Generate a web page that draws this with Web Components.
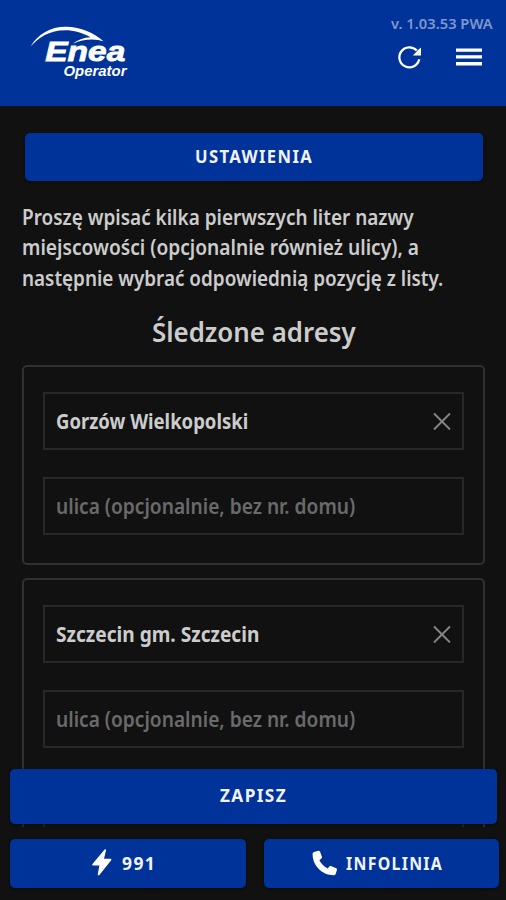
<!DOCTYPE html>
<html lang="pl">
<head>
<meta charset="utf-8">
<meta name="viewport" content="width=device-width, initial-scale=1">
<title>Enea Operator</title>
<style>
    html, body {
        margin: 0;
        height: 100%;
        overflow: hidden;
        background: #111;
    }
</style>
</head>
<body>
<enea-app></enea-app>
<script>
// Single line of text, squeezed to the given width
class FitText extends HTMLElement {

    constructor() {
        super();
        this.root = this.attachShadow({ mode: 'open' });
        this.root.innerHTML = `<style>
    :host {
        display: block;
        flex: 0 0 auto;
        white-space: nowrap;
    }

    span {
        display: inline-block;
        transform-origin: 0 50%;
    }
</style>
<span><slot></slot></span>`;
    }

    connectedCallback() {
        const width = parseFloat(this.getAttribute('width'));
        const span = this.root.querySelector('span');
        this.style.width = width + 'px';
        span.style.transform = `scaleX(${width / span.offsetWidth})`;
    }
}

class EneaLogo extends HTMLElement {

    constructor() {
        super();
        this.root = this.attachShadow({ mode: 'open' });
        this.root.innerHTML = `<style>
    :host {
        display: block;
        width: 100px;
        height: 56px;
    }

    svg {
        display: block;
        fill: #fff;
        font: italic bold 28.5px "Liberation Sans", Arial, sans-serif;
    }

    .operator {
        font-size: 14.5px;
    }
</style>
<svg width="100" height="56" viewBox="30 26 100 56">
    <path d="M30.5 46.5C38 34 51 26.6 66 26.8C81 27 94 33 103.5 41.3C97 38.8 84 38 73 43.8C77 40 84 37.4 90.5 37.2C82 32.5 74 30.2 65 30.2C50 30.3 39 37 30.5 46.5Z"/>
    <text x="45.3" y="60.6" textLength="80" lengthAdjust="spacingAndGlyphs" stroke="#fff" stroke-width=".8">Enea</text>
    <text class="operator" x="63.5" y="76.3" textLength="63" lengthAdjust="spacingAndGlyphs">Operator</text>
</svg>`;
    }
}

class AppHeader extends HTMLElement {

    constructor() {
        super();
        this.root = this.attachShadow({ mode: 'open' });
        this.root.innerHTML = `<style>
    :host {
        display: flex;
        justify-content: space-between;
        box-sizing: border-box;
        height: 106px;
        flex: 0 0 auto;
        padding: 13px 13px 0 30px;
        background: #003399;
    }

    enea-logo {
        margin-top: 13px;
    }

    .right {
        display: flex;
        flex-direction: column;
        align-items: flex-end;
    }

    .version {
        color: #7f97cc;
        font-size: 15px;
        font-weight: 600;
        line-height: 21px;
    }

    .icons {
        display: flex;
        gap: 33px;
        margin: 10px 11px 0 0;
    }

    svg {
        display: block;
    }
</style>
<enea-logo></enea-logo>
<div class="right">
    <fit-text class="version" width="102">v. 1.03.53 PWA</fit-text>
    <div class="icons">
        <svg width="28" height="28" viewBox="0 0 28 28">
            <path d="M24.2 15.2A10 10 0 1 1 21.8 6.6" fill="none" stroke="#fff" stroke-width="2.3"/>
            <path d="M26 3.4V11.4H17.8L21.5 7.7L22.8 6.3Z" fill="#fff"/>
        </svg>
        <svg width="26" height="28" viewBox="0 0 26 28">
            <path d="M0 4.4H26V7.7H0ZM0 11.3H26V14.5H0ZM0 18.1H26V21.4H0Z" fill="#fff"/>
        </svg>
    </div>
</div>`;
    }
}

class AppButton extends HTMLElement {

    constructor() {
        super();
        this.root = this.attachShadow({ mode: 'open' });
        this.root.innerHTML = `<style>
    :host {
        display: flex;
        align-items: center;
        justify-content: center;
        box-sizing: border-box;
        padding-bottom: 2px;
        border-radius: 5px;
        background: #003399;
        color: #f0f2fc;
        font-size: 18.5px;
        font-weight: 700;
        letter-spacing: 1.5px;
        line-height: 26px;
        box-shadow: 0 1px 3px rgba(0, 0, 0, .6);
    }
</style>
<slot name="icon"></slot>
<slot></slot>`;
    }
}

class AddressField extends HTMLElement {

    constructor() {
        super();
        this.root = this.attachShadow({ mode: 'open' });
        this.root.innerHTML = `<style>
    :host {
        display: flex;
        align-items: center;
        justify-content: space-between;
        box-sizing: border-box;
        height: 58px;
        padding: 0 11px;
        border: 2px solid #282828;
        color: #ccc;
        font-size: 21px;
        font-weight: 700;
        line-height: 30px;
    }

    :host([empty]) {
        color: #6a6a6a;
        font-weight: 600;
    }

    :host([empty]) svg {
        display: none;
    }
</style>
<slot></slot>
<svg width="18" height="18" viewBox="0 0 18 18">
    <path d="M1 1.5L17 17.5M17 1.5L1 17.5" stroke="#858585" stroke-width="1.9"/>
</svg>`;
    }
}

class AddressCard extends HTMLElement {

    constructor() {
        super();
        this.root = this.attachShadow({ mode: 'open' });
        const town = this.getAttribute('town');
        const width = this.getAttribute('town-width');
        this.root.innerHTML = `<style>
    :host {
        display: flex;
        flex-direction: column;
        flex: 0 0 auto;
        gap: 27px;
        box-sizing: border-box;
        height: 200px;
        padding: 25px 19px 0;
        border: 2px solid #303030;
        border-radius: 5px;
    }
</style>` + (town ? `
<address-field><fit-text width="${width}">${town}</fit-text></address-field>
<address-field empty><fit-text width="299">ulica (opcjonalnie, bez nr. domu)</fit-text></address-field>` : `
<address-field empty></address-field>`);
    }
}

class EneaApp extends HTMLElement {

    constructor() {
        super();
        this.root = this.attachShadow({ mode: 'open' });
        this.root.innerHTML = `<style>
    :host {
        display: flex;
        flex-direction: column;
        position: relative;
        width: 506px;
        height: 900px;
        overflow: hidden;
        background: #111;
        color: #ccc;
        font-family: "Noto Sans", "Open Sans", sans-serif;
        font-weight: 600;
    }

    main {
        display: flex;
        flex-direction: column;
        height: 721px;
        box-sizing: border-box;
        flex: 0 0 auto;
        overflow: hidden;
        padding: 27px 21px 0 22px;
    }

    .settings {
        height: 48px;
        flex: 0 0 auto;
        margin: 0 2px 0 3px;
    }

    .hint {
        margin-top: 21px;
        font-size: 21px;
        line-height: 30.3px;
    }

    .title {
        margin: 19px auto 13px;
        font-size: 27px;
        line-height: 40px;
    }

    .cards {
        display: flex;
        flex-direction: column;
        gap: 13px;
    }

    .save {
        position: absolute;
        left: 10px;
        right: 9px;
        top: 769px;
        height: 55px;
        padding-bottom: 4px;
    }

    footer {
        display: flex;
        gap: 18px;
        padding: 12px 7px 0 10px;
    }

    footer app-button {
        flex: 1 1 0;
        height: 49px;
        padding-right: 7px;
    }

    svg {
        display: block;
        fill: #fff;
    }
</style>
<app-header></app-header>
<main>
    <app-button class="settings"><fit-text width="118">USTAWIENIA</fit-text></app-button>
    <div class="hint">
        <fit-text width="392">Proszę wpisać kilka pierwszych liter nazwy</fit-text>
        <fit-text width="397">miejscowości (opcjonalnie również ulicy), a</fit-text>
        <fit-text width="421">następnie wybrać odpowiednią pozycję z listy.</fit-text>
    </div>
    <fit-text class="title" width="204">Śledzone adresy</fit-text>
    <div class="cards">
        <address-card town="Gorzów Wielkopolski" town-width="192"></address-card>
        <address-card town="Szczecin gm. Szczecin" town-width="203"></address-card>
        <address-card></address-card>
    </div>
</main>
<footer>
    <app-button>
        <svg slot="icon" width="20" height="27" viewBox="0 0 20 27" style="margin-right: 10px">
            <path d="M12.6 .4Q14.3 -.2 14 1.4L12 9.8H18.6Q20 10.2 19 11.6L7.4 26Q5.6 27.2 5.8 25L7.4 16.6H1Q-.3 16 .7 14.7Z"/>
        </svg>
        <fit-text width="34">991</fit-text>
    </app-button>
    <app-button>
        <svg slot="icon" width="26" height="26" viewBox="0 0 26 26" style="margin-right: 8px">
            <path d="M1.5 2.2L6.2 .7Q7.4 .5 8 1.6L10 7Q10.1 8 9.3 8.6L7.4 10.2Q10.2 15.6 15.8 18.4L17.4 16.3Q18 15.7 18.9 16L24.3 18.2Q25.3 18.8 25 19.8L23.7 24Q23.2 25.2 21.6 25.2C9.8 25 .6 15.6 .6 4Q.5 2.6 1.5 2.2Z"/>
        </svg>
        <fit-text width="97">INFOLINIA</fit-text>
    </app-button>
</footer>
<app-button class="save"><fit-text width="67">ZAPISZ</fit-text></app-button>`;
    }
}

customElements.define('fit-text', FitText);
customElements.define('enea-logo', EneaLogo);
customElements.define('app-header', AppHeader);
customElements.define('app-button', AppButton);
customElements.define('address-field', AddressField);
customElements.define('address-card', AddressCard);
customElements.define('enea-app', EneaApp);
</script>
</body>
</html>
